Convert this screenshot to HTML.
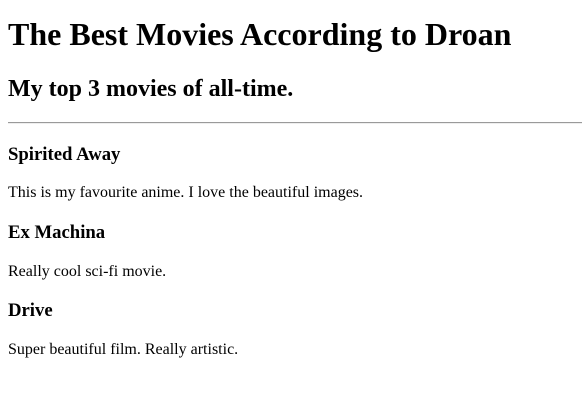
<!DOCTYPE html>
<html><head><meta charset="utf-8"><style>
html,body{background:#fff;}
body{margin:8px;font-family:"Liberation Serif",serif;color:#000;}
h1{font-size:32px;margin:15.5px 0 21.44px;}
h2{font-size:24px;margin:23.5px 0 18.9px;}
h3{font-size:18.72px;margin:19.7px 0 18.72px;}
p{font-size:16px;margin:16px 0;}
hr{margin:8px -8px 8px 0;border:0;border-top:1px solid #9a9a9a;border-bottom:1px solid #eee;height:0;}
</style></head><body>
<h1>The Best Movies According to Droan</h1>
<h2>My top 3 movies of all-time.</h2>
<hr>
<h3>Spirited Away</h3>
<p>This is my favourite anime. I love the beautiful images.</p>
<h3>Ex Machina</h3>
<p>Really cool sci-fi movie.</p>
<h3>Drive</h3>
<p>Super beautiful film. Really artistic.</p>
</body></html>
